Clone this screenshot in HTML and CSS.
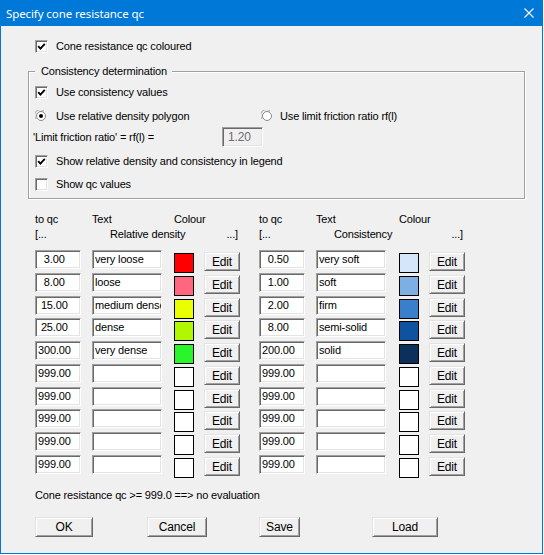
FILE: index.html
```html
<!DOCTYPE html>
<html lang="en">
<head>
    <meta charset="UTF-8">
    <title>Specify cone resistance qc</title>
    <link rel="stylesheet" href="styles.css">
</head>
<body>
    <div class="window">
        <div class="titlebar">
            <span class="title">Specify cone resistance qc</span>
            <svg class="close" width="10" height="10" viewBox="0 0 10 10">
                <path d="M0.5 0.5 L9.5 9.5 M9.5 0.5 L0.5 9.5" stroke="#fff" stroke-width="1.1" fill="none"/>
            </svg>
        </div>

        <div class="client">
            <div class="row first">
                <span class="check"><svg viewBox="0 0 9 9"><polyline points="1.2,4.2 3.4,6.6 7.8,1.8" fill="none" stroke="#000" stroke-width="1.9"/></svg></span>
                Cone resistance qc coloured
            </div>

            <fieldset class="group">
                <legend>Consistency determination</legend>
                <div class="row r1">
                    <span class="check"><svg viewBox="0 0 9 9"><polyline points="1.2,4.2 3.4,6.6 7.8,1.8" fill="none" stroke="#000" stroke-width="1.9"/></svg></span>
                    Use consistency values
                </div>
                <div class="row r2">
                    <span class="radio">
                        <svg width="12" height="12" viewBox="0 0 12 12">
                            <path d="M1.2 9.2 A5.3 5.3 0 0 1 9.2 1.2" stroke="#a0a0a0" fill="none"/>
                            <path d="M9.2 1.2 A5.3 5.3 0 0 1 1.2 9.2" stroke="#fff" fill="none"/>
                            <circle cx="6" cy="6" r="4.5" fill="#fff" stroke="#696969" stroke-width="0.8"/>
                            <circle cx="6" cy="6" r="2" fill="#000"/>
                        </svg>
                    </span>
                    <span class="opt">Use relative density polygon</span>
                    <span class="radio second">
                        <svg width="12" height="12" viewBox="0 0 12 12">
                            <path d="M1.2 9.2 A5.3 5.3 0 0 1 9.2 1.2" stroke="#a0a0a0" fill="none"/>
                            <path d="M9.2 1.2 A5.3 5.3 0 0 1 1.2 9.2" stroke="#fff" fill="none"/>
                            <circle cx="6" cy="6" r="4.5" fill="#fff" stroke="#696969" stroke-width="0.8"/>
                        </svg>
                    </span>
                    <span>Use limit friction ratio rf(l)</span>
                </div>
                <div class="row r3">
                    <span class="ratio-label">'Limit friction ratio' = rf(l) =</span>
                    <span class="field disabled">1.20</span>
                </div>
                <div class="row r4">
                    <span class="check"><svg viewBox="0 0 9 9"><polyline points="1.2,4.2 3.4,6.6 7.8,1.8" fill="none" stroke="#000" stroke-width="1.9"/></svg></span>
                    Show relative density and consistency in legend
                </div>
                <div class="row r5">
                    <span class="check"></span>
                    Show qc values
                </div>
            </fieldset>

            <div class="cols head">
                <span>to qc</span><span>Text</span><span class="span2">Colour</span>
                <span>to qc</span><span>Text</span><span class="span2">Colour</span>
                <div class="range left"><span class="open">[...</span><span>Relative density</span><span class="end">...]</span></div>
                <div class="range right"><span class="open">[...</span><span>Consistency</span><span class="end">...]</span></div>
            </div>

            <div class="cols rows">
                <span class="field num">  3.00</span><span class="field txt">very loose</span><span class="swatch c-red"></span><span class="btn edit">Edit</span>
                <span class="field num">  0.50</span><span class="field txt">very soft</span><span class="swatch c-b1"></span><span class="btn edit">Edit</span>

                <span class="field num">  8.00</span><span class="field txt">loose</span><span class="swatch c-pink"></span><span class="btn edit">Edit</span>
                <span class="field num">  1.00</span><span class="field txt">soft</span><span class="swatch c-b2"></span><span class="btn edit">Edit</span>

                <span class="field num"> 15.00</span><span class="field txt">medium dense</span><span class="swatch c-yellow"></span><span class="btn edit">Edit</span>
                <span class="field num">  2.00</span><span class="field txt">firm</span><span class="swatch c-b3"></span><span class="btn edit">Edit</span>

                <span class="field num"> 25.00</span><span class="field txt">dense</span><span class="swatch c-lime"></span><span class="btn edit">Edit</span>
                <span class="field num">  8.00</span><span class="field txt">semi-solid</span><span class="swatch c-b4"></span><span class="btn edit">Edit</span>

                <span class="field num">300.00</span><span class="field txt">very dense</span><span class="swatch c-green"></span><span class="btn edit">Edit</span>
                <span class="field num">200.00</span><span class="field txt">solid</span><span class="swatch c-b5"></span><span class="btn edit">Edit</span>

                <span class="field num">999.00</span><span class="field txt"></span><span class="swatch"></span><span class="btn edit">Edit</span>
                <span class="field num">999.00</span><span class="field txt"></span><span class="swatch"></span><span class="btn edit">Edit</span>

                <span class="field num">999.00</span><span class="field txt"></span><span class="swatch"></span><span class="btn edit">Edit</span>
                <span class="field num">999.00</span><span class="field txt"></span><span class="swatch"></span><span class="btn edit">Edit</span>

                <span class="field num">999.00</span><span class="field txt"></span><span class="swatch"></span><span class="btn edit">Edit</span>
                <span class="field num">999.00</span><span class="field txt"></span><span class="swatch"></span><span class="btn edit">Edit</span>

                <span class="field num">999.00</span><span class="field txt"></span><span class="swatch"></span><span class="btn edit">Edit</span>
                <span class="field num">999.00</span><span class="field txt"></span><span class="swatch"></span><span class="btn edit">Edit</span>

                <span class="field num">999.00</span><span class="field txt"></span><span class="swatch"></span><span class="btn edit">Edit</span>
                <span class="field num">999.00</span><span class="field txt"></span><span class="swatch"></span><span class="btn edit">Edit</span>
            </div>

            <div class="note">Cone resistance qc &gt;= 999.0 ==&gt; no evaluation</div>

            <div class="buttons">
                <span class="btn ok">OK</span>
                <span class="btn cancel">Cancel</span>
                <span class="btn save">Save</span>
                <span class="btn load">Load</span>
            </div>
        </div>
    </div>
</body>
</html>
```

FILE: styles.css
```css
body {
    margin: 0;
    background: #fff;
    font-family: "Liberation Sans", Arial, sans-serif;
    font-size: 11px;
    letter-spacing: -0.15px;
    color: #000;
}

.window {
    width: 543px;
    height: 554px;
    box-sizing: border-box;
    border: 1px solid #0078d7;
    border-top: 0;
    background: #f0f0f0;
}

.titlebar {
    height: 26px;
    background: #0078d7;
    display: flex;
    align-items: center;
    justify-content: space-between;
    padding: 0 8px 0 5px;
}

.title {
    font-family: "Noto Sans", sans-serif;
    font-size: 11.5px;
    letter-spacing: -0.1px;
    color: #fff;
}

.client {
    padding-left: 27px;
}

/* checkbox / radio rows */
.row {
    display: flex;
    align-items: center;
    height: 16px;
}

.row.first {
    margin-top: 12px;
    padding-left: 7px;
}

.check {
    width: 13px;
    height: 13px;
    box-sizing: border-box;
    background: #fff;
    border: 1px solid;
    border-color: #a0a0a0 #fff #fff #a0a0a0;
    box-shadow: inset 1px 1px 0 #696969, inset -1px -1px 0 #e3e3e3;
    padding: 1px;
    margin-right: 8px;
    flex: none;
}

.check svg {
    display: block;
    width: 9px;
    height: 9px;
}

.radio {
    width: 12px;
    height: 12px;
    margin-right: 9px;
    flex: none;
}

.radio svg {
    display: block;
}

.opt {
    width: 205px;
}

.radio.second {
    margin-right: 7px;
}

.group {
    width: 497px;
    box-sizing: border-box;
    margin: 10px 0 0 0;
    padding: 6px 6px 6px 6px;
    border: 1px solid #a0a0a0;
    box-shadow: 1px 1px 0 #fff, inset 1px 1px 0 #fff;
    min-width: 0;
}

.group legend {
    padding: 0 5px 0 6px;
    line-height: 14px;
    background: #f0f0f0;
}

.r2 { margin-top: 8px; }

.r3 {
    margin-top: 3px;
    height: 20px;
}

.ratio-label {
    margin-left: -2px;
    width: 189px;
}

.r4 { margin-top: 6px; }
.r5 { margin-top: 7px; }

/* sunken edit fields */
.field {
    display: block;
    box-sizing: border-box;
    height: 19px;
    line-height: 15px;
    background: #fff;
    border: 1px solid;
    border-color: #a0a0a0 #fff #fff #a0a0a0;
    box-shadow: inset 1px 1px 0 #696969, inset -1px -1px 0 #e3e3e3;
    padding: 1px 0 0 2px;
    white-space: pre;
    overflow: hidden;
}

.field.disabled {
    width: 41px;
    height: 20px;
    line-height: 16px;
    background: #f0f0f0;
    color: #6d6d6d;
    padding-left: 5px;
    font-size: 12px;
}

.num { width: 46px; }
.txt { width: 70px; padding-left: 2px; }

/* table */
.cols {
    display: grid;
    grid-template-columns: 57px 82px 30px 55px 57px 83px 30px 36px;
    margin-left: 7px;
}

.head {
    margin-top: 13px;
    grid-auto-rows: 15px;
    line-height: 15px;
}

.span2 { grid-column: span 2; }

.range {
    grid-column: span 4;
    display: flex;
}

.range .open { width: 75px; }
.range .end { margin-left: auto; }
.range.left { padding-right: 21px; }
.range.right { padding-right: 2px; }

.rows {
    margin-top: 8px;
    grid-auto-rows: 19px;
    row-gap: 3.78px;
}

.swatch {
    display: block;
    width: 20px;
    height: 20px;
    margin-top: 3px;
    box-sizing: border-box;
    border: 1px solid #000;
    background: #fff;
}

.c-red { background: #ff0000; }
.c-pink { background: #ff6680; }
.c-yellow { background: #eaff00; }
.c-lime { background: #b0f800; }
.c-green { background: #2af52a; }
.c-b1 { background: #d4e6fa; }
.c-b2 { background: #7cb0e4; }
.c-b3 { background: #3a7fcc; }
.c-b4 { background: #0f52a0; }
.c-b5 { background: #0c2f5c; }

/* raised buttons */
.btn {
    display: flex;
    align-items: center;
    justify-content: center;
    box-sizing: border-box;
    background: #f0f0f0;
    border: 1px solid;
    border-color: #e3e3e3 #696969 #696969 #e3e3e3;
    box-shadow: inset 1px 1px 0 #fff, inset -1px -1px 0 #a0a0a0;
    font-size: 12px;
    padding-top: 1px;
}

.edit {
    width: 36px;
    height: 19px;
    margin-top: 2px;
}

.note {
    margin: 14px 0 0 7px;
    line-height: 15px;
}

.buttons {
    display: grid;
    grid-template-columns: 112px 112px 113px auto;
    margin: 14px 0 0 7px;
}

.buttons .btn { height: 20px; }
.ok { width: 58px; }
.cancel { width: 60px; }
.save { width: 41px; }
.load { width: 66px; }
```
